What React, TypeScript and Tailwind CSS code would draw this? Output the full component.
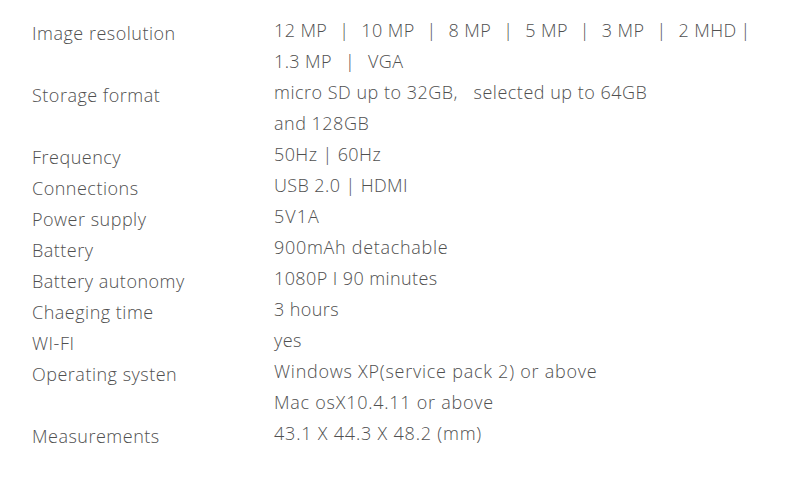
import React from "react";

type Spec = { label: string; lines: React.ReactNode[]; track?: string };

// separator between resolution values: thin bar centred in a fixed gap
const Bar = ({ w = "w-[34px]" }: { w?: string }) => (
  <span className={`inline-block text-center ${w}`}>|</span>
);

const specs: Spec[] = [
  {
    label: "Image resolution",
    lines: [
      <>
        12 MP<Bar />10 MP<Bar />8 MP<Bar />5 MP<Bar />3 MP<Bar />2 MHD
        <span className="inline-block w-[14px] text-right">|</span>
      </>,
      <>
        1.3 MP<Bar w="w-[36px]" />VGA
      </>,
    ],
  },
  {
    label: "Storage format",
    track: "tracking-[0.5px]",
    lines: [
      <>
        micro SD up to 32GB<span className="inline-block w-[20px]">,</span>
        selected up to 64GB
      </>,
      "and 128GB",
    ],
  },
  { label: "Frequency", lines: ["50Hz | 60Hz"] },
  { label: "Connections", lines: ["USB 2.0 | HDMI"] },
  { label: "Power supply", track: "tracking-[1px]", lines: ["5V1A"] },
  { label: "Battery", track: "tracking-[0.7px]", lines: ["900mAh detachable"] },
  { label: "Battery autonomy", lines: ["1080P I 90 minutes"] },
  { label: "Chaeging time", lines: ["3 hours"] },
  { label: "WI-FI", lines: ["yes"] },
  {
    label: "Operating systen",
    track: "tracking-[0.75px]",
    lines: ["Windows XP(service pack 2) or above", "Mac osX10.4.11 or above"],
  },
  {
    label: "Measurements",
    track: "tracking-[0.8px]",
    lines: ["43.1 X 44.3 X 48.2 (mm)"],
  },
];

export default function App() {
  return (
    <div
      className="w-[800px] h-[486px] bg-white pt-[15px] pl-[32px] text-[18px] leading-[31px] text-[#505050] font-light"
      style={{ fontFamily: '"Open Sans", "Noto Sans", "Noto Sans CJK SC", sans-serif' }}
    >
      {specs.map((row) => (
        <div key={row.label} className="flex items-start">
          <div className="w-[242px] shrink-0 mt-[3px] -mb-[3px] tracking-[0.5px]">
            {row.label}
          </div>
          <div className={`flex flex-col ${row.track ?? "tracking-[0.4px]"}`}>
            {row.lines.map((line, i) => (
              <div key={i} className="whitespace-pre">
                {line}
              </div>
            ))}
          </div>
        </div>
      ))}
    </div>
  );
}
